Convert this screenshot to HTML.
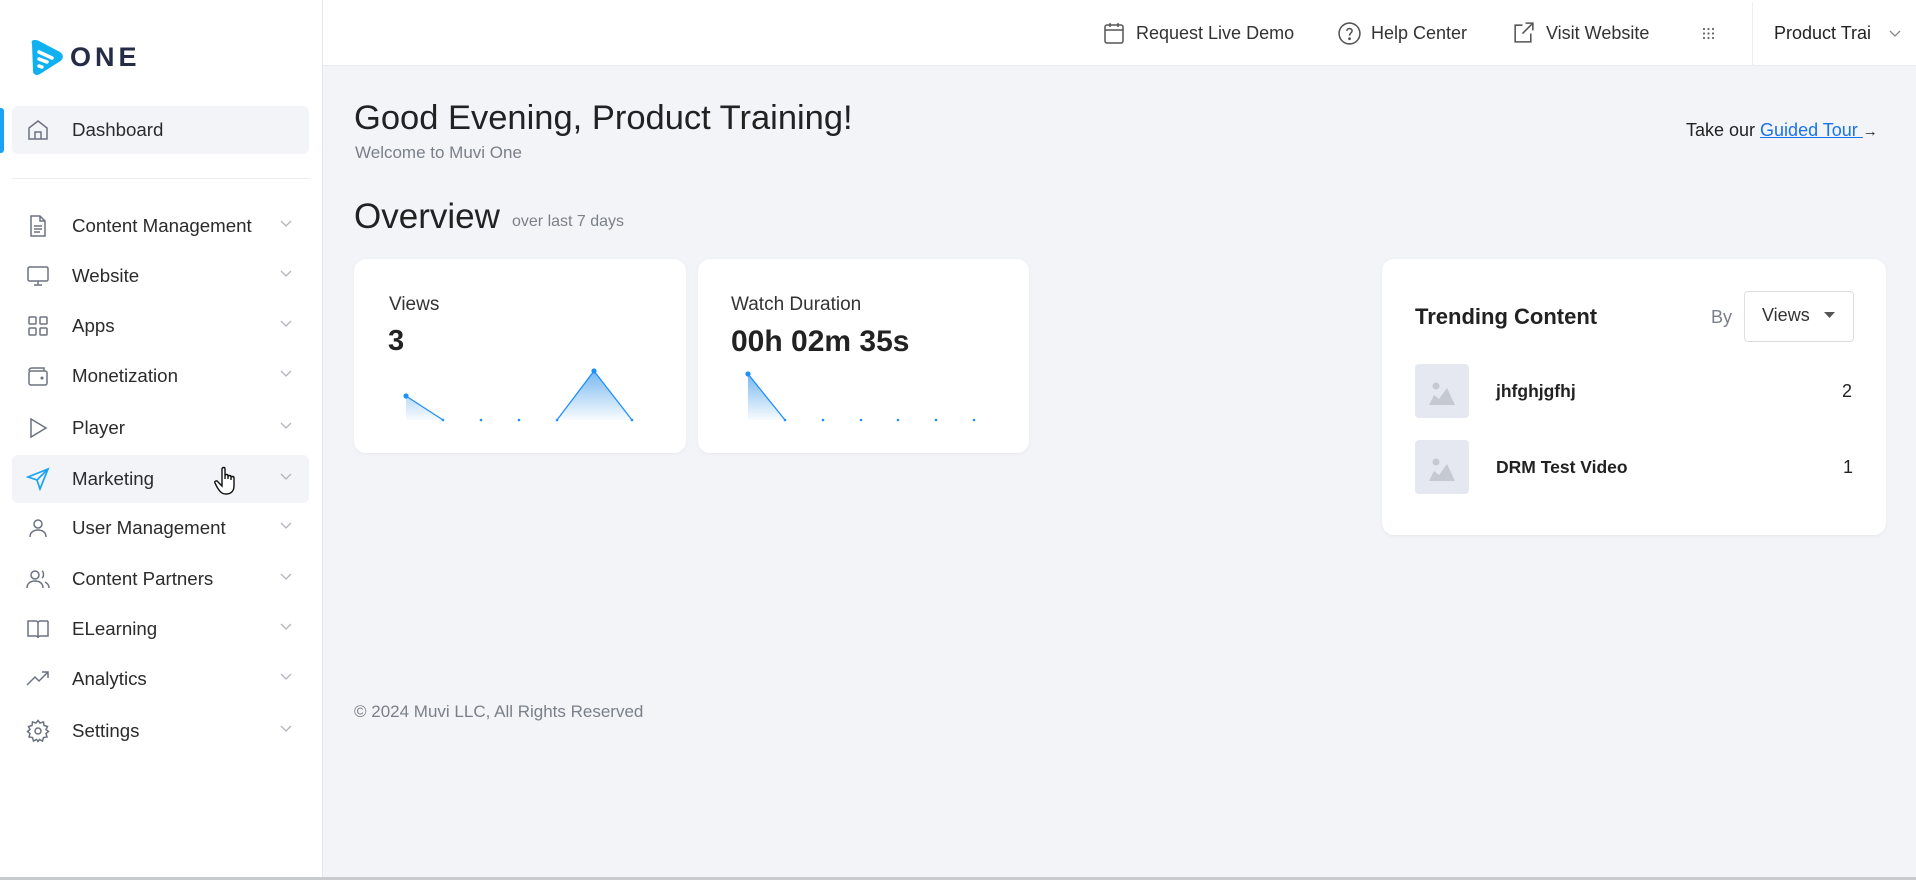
<!DOCTYPE html>
<html><head><meta charset="utf-8"><style>
*{margin:0;padding:0;box-sizing:border-box}
body{width:1916px;height:880px;overflow:hidden;background:#f3f4f8;font-family:"Liberation Sans",sans-serif;color:#222;position:relative}
.abs{position:absolute}
#side{left:0;top:0;width:323px;height:877px;background:#fff;border-right:1px solid #e5e7eb}
#hdr{left:323px;top:0;width:1593px;height:66px;background:#fff;border-bottom:1px solid #e8e9ee}
.topline{left:0;top:0;width:1916px;height:2px;background:#dfe0e3}
.botline{left:0;top:877px;width:1916px;height:3px;background:#c9cacd}
.item{position:absolute;left:12px;width:297px;height:48px;border-radius:6px;font-size:18.7px;color:#2b2b2b}
.item .ic{position:absolute;left:14px;top:12px;width:24px;height:24px}
.item .tx{position:absolute;left:60px;top:14px;line-height:20px}
.item .ch{position:absolute;left:268px;top:18px}
svg{display:block}
.h{font-size:18px;color:#333;line-height:20px}
.card{background:#fff;border-radius:12px;box-shadow:0 1px 4px rgba(0,0,0,.05)}
</style></head><body>
<div class="abs topline"></div>
<div class="abs" id="side">
 <svg class="abs" style="left:30px;top:39px" width="34" height="37" viewBox="0 0 34 37"><path d="M4 1 C2 1 1 3 2 5 L3 32 C3 36 7 37 10 35 L29 23 C34 20 34 16 30 13 L9 2 C7 1 6 1 4 1 Z" fill="#10b1f0"/><path d="M9 13 L22 19 M9 20 L17 23 M9 27 L12 28" stroke="#fff" stroke-width="3.5" stroke-linecap="round"/></svg>
 <div class="abs" style="left:70px;top:42px;font-size:27px;font-weight:bold;letter-spacing:4px;color:#262c45">ONE</div>
 <div class="abs" style="left:0;top:108px;width:4px;height:45px;background:#1aa3f5;border-radius:0 3px 3px 0"></div>
 <div class="item" style="top:106px;background:#f3f4f8"><svg class="ic" viewBox="0 0 24 24" fill="none" stroke="#6b7280" stroke-width="1.5"><path d="M3 10 L12 3 L21 10 V21 H3 Z"/><path d="M9 21 V14 H15 V21"/></svg><div class="tx">Dashboard</div></div>
 <div class="abs" style="left:12px;top:178px;width:297px;height:1px;background:#eceef2"></div>

 <div class="item" style="top:202px"><svg class="ic" viewBox="0 0 24 24" fill="none" stroke="#6b7280" stroke-width="1.5"><path d="M5 2 H14 L19 7 V22 H5 Z"/><path d="M14 2 V7 H19 M8 12 H16 M8 15 H16 M8 18 H14"/></svg><div class="tx">Content Management</div><svg class="ch" width="12" height="8" viewBox="0 0 12 8"><path d="M1 1 L6 6 L11 1" fill="none" stroke="#b0b4bb" stroke-width="1.3"/></svg></div>
 <div class="item" style="top:252px"><svg class="ic" viewBox="0 0 24 24" fill="none" stroke="#6b7280" stroke-width="1.5"><rect x="2" y="3" width="20" height="14" rx="1.5"/><path d="M8 21 H16 M12 17 V21"/></svg><div class="tx">Website</div><svg class="ch" width="12" height="8" viewBox="0 0 12 8"><path d="M1 1 L6 6 L11 1" fill="none" stroke="#b0b4bb" stroke-width="1.3"/></svg></div>
 <div class="item" style="top:302px"><svg class="ic" viewBox="0 0 24 24" fill="none" stroke="#6b7280" stroke-width="1.5"><rect x="3" y="3" width="7" height="7" rx="1"/><rect x="14" y="3" width="7" height="7" rx="1"/><rect x="3" y="14" width="7" height="7" rx="1"/><rect x="14" y="14" width="7" height="7" rx="1"/></svg><div class="tx">Apps</div><svg class="ch" width="12" height="8" viewBox="0 0 12 8"><path d="M1 1 L6 6 L11 1" fill="none" stroke="#b0b4bb" stroke-width="1.3"/></svg></div>
 <div class="item" style="top:352px"><svg class="ic" viewBox="0 0 24 24" fill="none" stroke="#6b7280" stroke-width="1.5"><path d="M3 7 C3 5 4 4 6 4 H18 V7"/><rect x="3" y="7" width="18" height="14" rx="2"/><circle cx="16" cy="14" r="0.8" fill="#6b7280"/></svg><div class="tx">Monetization</div><svg class="ch" width="12" height="8" viewBox="0 0 12 8"><path d="M1 1 L6 6 L11 1" fill="none" stroke="#b0b4bb" stroke-width="1.3"/></svg></div>
 <div class="item" style="top:404px"><svg class="ic" viewBox="0 0 24 24" fill="none" stroke="#6b7280" stroke-width="1.5"><path d="M5 3 L20 12 L5 21 Z"/></svg><div class="tx">Player</div><svg class="ch" width="12" height="8" viewBox="0 0 12 8"><path d="M1 1 L6 6 L11 1" fill="none" stroke="#b0b4bb" stroke-width="1.3"/></svg></div>
 <div class="item" style="top:455px;background:#f3f4f8"><svg class="ic" viewBox="0 0 24 24" fill="none" stroke="#1aa3f5" stroke-width="1.7"><path d="M22 2 L2 10 L11 13 L14 22 Z"/><path d="M22 2 L11 13"/></svg><div class="tx">Marketing</div><svg class="ch" width="12" height="8" viewBox="0 0 12 8"><path d="M1 1 L6 6 L11 1" fill="none" stroke="#b0b4bb" stroke-width="1.3"/></svg>
  <svg class="abs" style="left:202px;top:11px" width="26" height="30" viewBox="0 0 26 30"><path d="M8 3 C8 1 11 1 11 3 V13 V10 C11 8 14 8 14 10 V13 V11 C14 9 17 9 17 11 V14 V12 C17 10 20 10 20 12 V20 C20 25 17 28 12 28 C8 28 6 26 3 21 L1 17 C0 15 3 14 4 16 L8 20 Z" fill="#fff" stroke="#111" stroke-width="1.4"/></svg></div>
 <div class="item" style="top:504px"><svg class="ic" viewBox="0 0 24 24" fill="none" stroke="#6b7280" stroke-width="1.5"><circle cx="12" cy="8" r="4"/><path d="M4 21 C4 16 8 14 12 14 C16 14 20 16 20 21"/></svg><div class="tx">User Management</div><svg class="ch" width="12" height="8" viewBox="0 0 12 8"><path d="M1 1 L6 6 L11 1" fill="none" stroke="#b0b4bb" stroke-width="1.3"/></svg></div>
 <div class="item" style="top:555px"><svg class="ic" viewBox="0 0 24 24" fill="none" stroke="#6b7280" stroke-width="1.5"><circle cx="9" cy="8" r="4"/><path d="M1 21 C1 16 5 14 9 14 C13 14 17 16 17 21 M16 4 C18 5 18 10 16 11 M19 15 C21 16 23 18 23 21"/></svg><div class="tx">Content Partners</div><svg class="ch" width="12" height="8" viewBox="0 0 12 8"><path d="M1 1 L6 6 L11 1" fill="none" stroke="#b0b4bb" stroke-width="1.3"/></svg></div>
 <div class="item" style="top:605px"><svg class="ic" viewBox="0 0 24 24" fill="none" stroke="#6b7280" stroke-width="1.5"><path d="M2 4 H10 C11 4 12 5 12 6 V21 C12 20 11 19 10 19 H2 Z M22 4 H14 C13 4 12 5 12 6 M22 4 V19 H14 C13 19 12 20 12 21"/></svg><div class="tx">ELearning</div><svg class="ch" width="12" height="8" viewBox="0 0 12 8"><path d="M1 1 L6 6 L11 1" fill="none" stroke="#b0b4bb" stroke-width="1.3"/></svg></div>
 <div class="item" style="top:655px"><svg class="ic" viewBox="0 0 24 24" fill="none" stroke="#6b7280" stroke-width="1.5"><path d="M1 18 L9 10 L13 14 L22 5 M16 5 H22 V11"/></svg><div class="tx">Analytics</div><svg class="ch" width="12" height="8" viewBox="0 0 12 8"><path d="M1 1 L6 6 L11 1" fill="none" stroke="#b0b4bb" stroke-width="1.3"/></svg></div>
 <div class="item" style="top:707px"><svg class="ic" viewBox="0 0 24 24" fill="none" stroke="#6b7280" stroke-width="1.5"><circle cx="12" cy="12" r="3"/><path d="M12 1.5 L14 4 L17.5 3 L18 6.5 L21.5 7.5 L20 10.5 L22.5 12.5 L20 14.5 L21 18 L17.5 18.5 L16.5 22 L13.5 20.5 L12 22.5 L10.5 20.5 L7.5 22 L6.5 18.5 L3 18 L4 14.5 L1.5 12.5 L4 10.5 L2.5 7.5 L6 6.5 L6.5 3 L10 4 Z"/></svg><div class="tx">Settings</div><svg class="ch" width="12" height="8" viewBox="0 0 12 8"><path d="M1 1 L6 6 L11 1" fill="none" stroke="#b0b4bb" stroke-width="1.3"/></svg></div>
</div>

<div class="abs" id="hdr"></div>
<svg class="abs" style="left:1102px;top:21px" width="24" height="24" viewBox="0 0 24 24" fill="none" stroke="#555" stroke-width="1.5"><rect x="3" y="4" width="18" height="18" rx="2"/><path d="M3 9 H21 M8 2 V6 M16 2 V6"/></svg>
<div class="abs h" style="left:1136px;top:23px">Request Live Demo</div>
<svg class="abs" style="left:1337px;top:21px" width="25" height="25" viewBox="0 0 24 24" fill="none" stroke="#555" stroke-width="1.5"><circle cx="12" cy="12" r="10"/><path d="M9.5 9.5 C9.5 6.5 14.5 6.5 14.5 9.5 C14.5 11.5 12 11.5 12 14"/><circle cx="12" cy="17" r="0.6" fill="#555"/></svg>
<div class="abs h" style="left:1371px;top:23px">Help Center</div>
<svg class="abs" style="left:1511px;top:20px" width="25" height="25" viewBox="0 0 24 24" fill="none" stroke="#555" stroke-width="1.5"><path d="M11 5 H4 V21 H19 V13 M14 3 H21 V10 M21 3 L11 13"/></svg>
<div class="abs h" style="left:1546px;top:23px">Visit Website</div>
<svg class="abs" style="left:1702px;top:27px" width="13" height="13" viewBox="0 0 13 13" fill="#666"><circle cx="2" cy="2" r="1.1"/><circle cx="6.5" cy="2" r="1.1"/><circle cx="11" cy="2" r="1.1"/><circle cx="2" cy="6.5" r="1.1"/><circle cx="6.5" cy="6.5" r="1.1"/><circle cx="11" cy="6.5" r="1.1"/><circle cx="2" cy="11" r="1.1"/><circle cx="6.5" cy="11" r="1.1"/><circle cx="11" cy="11" r="1.1"/></svg>
<div class="abs" style="left:1752px;top:2px;width:1px;height:64px;background:#eee"></div>
<div class="abs h" style="left:1774px;top:23px;color:#222">Product Trai</div>
<svg class="abs" style="left:1889px;top:30px" width="12" height="8" viewBox="0 0 12 8"><path d="M1 1 L6 6 L11 1" fill="none" stroke="#888" stroke-width="1.3"/></svg>

<div class="abs" style="left:354px;top:99px;font-size:34.5px;color:#222">Good Evening, Product Training!</div>
<div class="abs" style="left:355px;top:143px;font-size:17px;color:#7a8089">Welcome to Muvi One</div>
<div class="abs" style="left:1686px;top:120px;font-size:18px;color:#222">Take our <span style="color:#1a73e8;text-decoration:underline">Guided Tour </span> <span style="font-size:15px">&#8594;</span></div>
<div class="abs" style="left:354px;top:197px;font-size:35px;color:#222">Overview</div>
<div class="abs" style="left:512px;top:213px;font-size:16px;color:#7a8089">over last 7 days</div>

<div class="abs card" style="left:354px;top:259px;width:332px;height:194px"></div>
<div class="abs" style="left:389px;top:294px;font-size:19px;color:#333">Views</div>
<div class="abs" style="left:388px;top:325px;font-size:29px;font-weight:bold;color:#222">3</div>
<div class="abs card" style="left:698px;top:259px;width:331px;height:194px"></div>
<div class="abs" style="left:731px;top:294px;font-size:19px;color:#333">Watch Duration</div>
<div class="abs" style="left:731px;top:325px;font-size:30px;font-weight:bold;color:#222">00h 02m 35s</div>
<svg class="abs" style="left:0;top:0" width="1100" height="460">
 <defs><linearGradient id="g" x1="0" y1="0" x2="0" y2="1"><stop offset="0" stop-color="#1e88e5" stop-opacity=".6"/><stop offset="1" stop-color="#1e88e5" stop-opacity=".03"/></linearGradient></defs>
 <path d="M406 396 L443 420 L406 420 Z M557 420 L594 371 L632 420 Z" fill="url(#g)"/>
 <path d="M406 396 L443 420 M557 420 L594 371 L632 420" stroke="#1e90ff" stroke-width="1.3" fill="none"/>
 <g fill="#1e90ff"><circle cx="406" cy="396" r="2.6"/><circle cx="594" cy="371" r="2.6"/><circle cx="443" cy="420" r="1.3"/><circle cx="481" cy="420" r="1.3"/><circle cx="519" cy="420" r="1.3"/><circle cx="557" cy="420" r="1.3"/><circle cx="632" cy="420" r="1.3"/></g>
 <path d="M748 374 L785 420 L748 420 Z" fill="url(#g)"/>
 <path d="M748 374 L785 420" stroke="#1e90ff" stroke-width="1.3" fill="none"/>
 <g fill="#1e90ff"><circle cx="748" cy="374" r="2.6"/><circle cx="785" cy="420" r="1.3"/><circle cx="823" cy="420" r="1.3"/><circle cx="861" cy="420" r="1.3"/><circle cx="898" cy="420" r="1.3"/><circle cx="936" cy="420" r="1.3"/><circle cx="974" cy="420" r="1.3"/></g>
</svg>

<div class="abs card" style="left:1382px;top:259px;width:504px;height:276px"></div>
<div class="abs" style="left:1415px;top:304px;font-size:22px;font-weight:bold;color:#222">Trending Content</div>
<div class="abs" style="left:1711px;top:307px;font-size:18px;color:#7a8089">By</div>
<div class="abs" style="left:1744px;top:291px;width:110px;height:51px;border:1px solid #dcdee3;border-radius:4px;background:#fff"></div>
<div class="abs" style="left:1762px;top:305px;font-size:18px;color:#333">Views</div>
<svg class="abs" style="left:1824px;top:312px" width="11" height="7" viewBox="0 0 11 7"><path d="M0 0 H11 L5.5 6 Z" fill="#555"/></svg>
<div class="abs" style="left:1415px;top:364px;width:54px;height:54px;background:#e5e8f1;border-radius:4px"></div>
<svg class="abs" style="left:1428px;top:377px" width="28" height="28" viewBox="0 0 28 28" fill="#c4c9d2"><circle cx="8" cy="9" r="3.5"/><path d="M1 28 L6 18 L11 22 L19 11 L27 28 Z"/></svg>
<div class="abs" style="left:1415px;top:440px;width:54px;height:54px;background:#e5e8f1;border-radius:4px"></div>
<svg class="abs" style="left:1428px;top:453px" width="28" height="28" viewBox="0 0 28 28" fill="#c4c9d2"><circle cx="8" cy="9" r="3.5"/><path d="M1 28 L6 18 L11 22 L19 11 L27 28 Z"/></svg>
<div class="abs" style="left:1496px;top:381px;font-size:17.5px;font-weight:bold;color:#222">jhfghjgfhj</div>
<div class="abs" style="left:1842px;top:381px;font-size:18px;color:#222">2</div>
<div class="abs" style="left:1496px;top:457px;font-size:17.5px;font-weight:bold;color:#222">DRM Test Video</div>
<div class="abs" style="left:1843px;top:457px;font-size:18px;color:#222">1</div>

<div class="abs" style="left:354px;top:702px;font-size:17px;color:#7a8089">© 2024 Muvi LLC, All Rights Reserved</div>
<div class="abs botline"></div>
</body></html>
